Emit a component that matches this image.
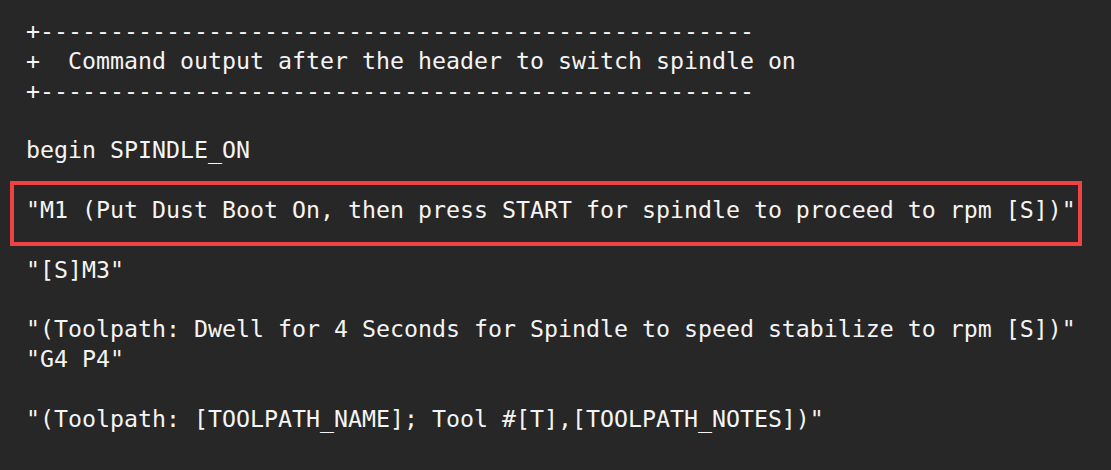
const DASHES = "+" + "-".repeat(51);

const lines: { text: string; boxed?: boolean }[] = [
  { text: DASHES },
  { text: "+  Command output after the header to switch spindle on" },
  { text: DASHES },
  { text: "" },
  { text: "begin SPINDLE_ON" },
  { text: "" },
  { text: '"M1 (Put Dust Boot On, then press START for spindle to proceed to rpm [S])"', boxed: true },
  { text: "" },
  { text: '"[S]M3"' },
  { text: "" },
  { text: '"(Toolpath: Dwell for 4 Seconds for Spindle to speed stabilize to rpm [S])"' },
  { text: '"G4 P4"' },
  { text: "" },
  { text: '"(Toolpath: [TOOLPATH_NAME]; Tool #[T],[TOOLPATH_NOTES])"' },
];

export default function App() {
  return (
    <div className="w-[1111px] h-[470px] overflow-hidden bg-[#272727] pt-[16px] pl-[26px] text-[#f4f4f4] font-['DejaVu_Sans_Mono',monospace] text-[23.25px] leading-[29.85px]">
      {lines.map((l, i) => (
        <div key={i} className="relative h-[29.85px] whitespace-pre">
          {l.text}
          {l.boxed && (
            <span className="absolute left-[-16px] top-[-14px] w-[1072px] h-[65px] border-[4px] border-[#f04242]" />
          )}
        </div>
      ))}
    </div>
  );
}
